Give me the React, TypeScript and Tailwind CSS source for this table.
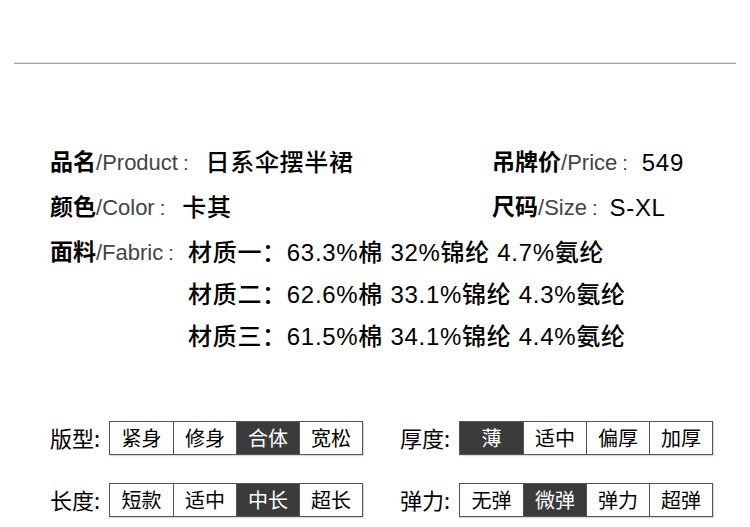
const font = "font-['Liberation_Sans','Noto_Sans_CJK_SC',sans-serif]";
const cjk = "font-['Noto_Sans_CJK_SC','Liberation_Sans',sans-serif]";

type Group = { label: string; options: string[]; active: number };

const left: Group[] = [
  { label: '版型:', options: ['紧身', '修身', '合体', '宽松'], active: 2 },
  { label: '长度:', options: ['短款', '适中', '中长', '超长'], active: 2 },
];
const right: Group[] = [
  { label: '厚度:', options: ['薄', '适中', '偏厚', '加厚'], active: 0 },
  { label: '弹力:', options: ['无弹', '微弹', '弹力', '超弹'], active: 1 },
];

function Field({ cn, en, value, gap = 'mr-[17px]' }: { cn: string; en: string; value: string; gap?: string }) {
  return (
    <div className="flex h-[45px] items-center">
      <span className="text-[23px] font-bold text-black">{cn}</span>
      <span className="text-[22px] text-[#444]">/{en}</span>
      <span className={`ml-[5px] text-[20px] text-[#444] ${gap}`}>:</span>
      <span className="text-[24px] font-medium tracking-[0.7px] text-black">{value}</span>
    </div>
  );
}

function Segments({ g }: { g: Group }) {
  return (
    <div className={`flex h-[35px] items-center ${cjk}`}>
      <span className="w-[59px] text-[22px] text-black">{g.label}</span>
      <div className="flex border-[1.5px] border-[#555] shadow-[1px_1px_1px_rgba(0,0,0,0.15)]">
        {g.options.map((o, i) => (
          <div
            key={o}
            className={`flex h-[32px] w-[63px] items-center justify-center text-[20px] ${
              i > 0 ? 'border-l border-[#555]' : ''
            } ${i === g.active ? 'bg-[#3b3b3b] text-white' : 'bg-white text-black'}`}
          >
            {o}
          </div>
        ))}
      </div>
    </div>
  );
}

export default function App() {
  const materials = [
    '材质一：63.3%棉 32%锦纶 4.7%氨纶',
    '材质二：62.6%棉 33.1%锦纶 4.3%氨纶',
    '材质三：61.5%棉 34.1%锦纶 4.4%氨纶',
  ];

  return (
    <div className={`h-[527px] w-[750px] overflow-hidden bg-white ${font}`}>
      <div className="mx-[14px] mt-[62px] h-px bg-[#e2e2e2]" />
      <div className="mx-[14px] h-px bg-[#a3a3a3]" />

      <div className="mt-[76px] flex pl-[50px]">
        <div className="w-[442px]">
          <Field cn="品名" en="Product" value="日系伞摆半裙" />
          <Field cn="颜色" en="Color" value="卡其" />
        </div>
        <div>
          <Field cn="吊牌价" en="Price" value="549" gap="mr-[14px]" />
          <Field cn="尺码" en="Size" value="S-XL" gap="mr-[12px]" />
        </div>
      </div>

      <div className="flex pl-[50px]">
        <div className="flex h-[45px] w-[138px] items-center self-start">
          <span className="text-[23px] font-bold text-black">面料</span>
          <span className="text-[22px] text-[#444]">/Fabric</span>
          <span className="ml-[5px] text-[20px] text-[#444]">:</span>
        </div>
        <div className="pt-[1px]">
          {materials.map((m, i) => (
            <div
              key={m}
              className={`flex items-center text-[24px] font-medium tracking-[0.7px] text-black ${
                i === 0 ? 'h-[43px]' : 'h-[42px]'
              }`}
            >
              {m}
            </div>
          ))}
        </div>
      </div>

      <div className="mt-[62px] flex pl-[50px]">
        <div className="flex w-[350px] flex-col gap-[27px]">
          {left.map((g) => (
            <Segments key={g.label} g={g} />
          ))}
        </div>
        <div className="flex flex-col gap-[27px]">
          {right.map((g) => (
            <Segments key={g.label} g={g} />
          ))}
        </div>
      </div>
    </div>
  );
}
